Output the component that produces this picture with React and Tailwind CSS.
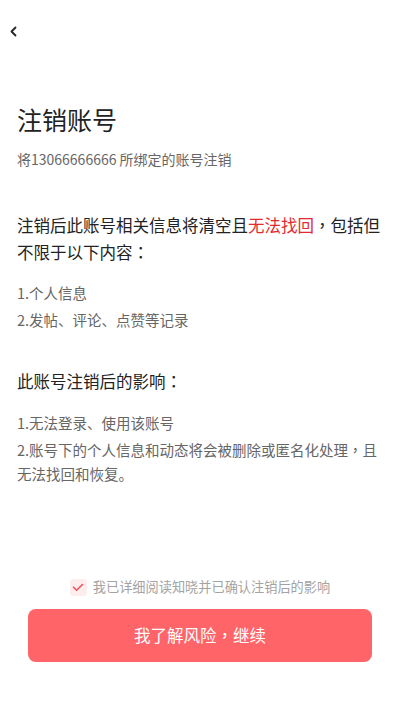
import React from 'react';

const font = { fontFamily: '"Noto Sans CJK SC", "Noto Sans", sans-serif' };

// full-width punctuation sits centred in its cell in the design
const P = ({ children }) => (
  <span style={{ fontFamily: '"Noto Sans CJK TC", "Noto Sans CJK SC", sans-serif' }}>{children}</span>
);

const ImpactList = ({ items }) => (
  <ul className="space-y-[3px] text-[14.5px] leading-[24px] text-[#666]">
    {items.map((item, i) => (
      <li key={i}>{item}</li>
    ))}
  </ul>
);

const App = () => {
  const [agreed, setAgreed] = React.useState(true);

  return (
    <div className="flex h-[710px] w-[400px] flex-col bg-white" style={font}>
      <div className="flex h-[62px] items-center pl-[7px]">
        <button className="flex h-[14px] w-[12px] items-center justify-center">
          <svg width="9" height="11" viewBox="0 0 9 11" fill="none">
            <path d="M6.5 1.5L2.5 5.5L6.5 9.5" stroke="#222" strokeWidth="1.8" strokeLinecap="round" strokeLinejoin="round" />
          </svg>
        </button>
      </div>

      <div className="px-[17px]">
        <h1 className="mt-[39px] text-[25px] font-normal leading-[36px] text-[#222]">注销账号</h1>
        <p className="mt-[11px] text-[14px] leading-[22px] text-[#666]">将13066666666 所绑定的账号注销</p>

        <p className="mt-[42px] text-[16.5px] leading-[27px] text-[#222]">
          注销后此账号相关信息将清空且<span className="text-[#e42a2f]">无法找回</span>
          <P>，</P>包括但不限于以下内容<P>：</P>
        </p>
        <div className="mt-[14.5px]">
          <ImpactList items={['1.个人信息', '2.发帖、评论、点赞等记录']} />
        </div>

        <h2 className="mt-[36px] text-[16.5px] font-normal leading-[27px] text-[#222]">
          此账号注销后的影响<P>：</P>
        </h2>
        <div className="mt-[16px]">
          <ImpactList
            items={[
              '1.无法登录、使用该账号',
              <>
                2.账号下的个人信息和动态将会被删除或匿名化处理<P>，</P>且无法找回和恢复。
              </>,
            ]}
          />
        </div>
      </div>

      <div className="mt-auto px-[28px] pb-[48px]">
        <label className="flex h-[20px] cursor-pointer items-center justify-center gap-[6px]">
          <span
            onClick={() => setAgreed(!agreed)}
            className="flex h-[17px] w-[17px] items-center justify-center rounded-[3px] bg-[#fdedef]"
          >
            {agreed && (
              <svg width="12" height="9" viewBox="0 0 12 9" fill="none">
                <path d="M1.5 4.2L4.6 7.3L10.5 1.5" stroke="#f0525a" strokeWidth="1.6" strokeLinecap="round" strokeLinejoin="round" />
              </svg>
            )}
          </span>
          <span className="text-[13.2px] text-[#a3a3a3]">我已详细阅读知晓并已确认注销后的影响</span>
        </label>

        <button className="mt-[12px] flex h-[53px] w-full items-center justify-center rounded-[8px] bg-[#ff6469] text-[16.5px] text-white">
          我了解风险<P>，</P>继续
        </button>
      </div>
    </div>
  );
};

export default App;
